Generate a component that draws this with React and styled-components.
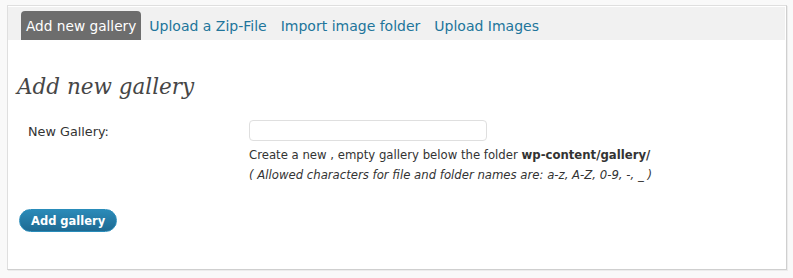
import React from 'react';
import styled, { createGlobalStyle } from 'styled-components';

const GlobalStyle = createGlobalStyle`
  body {
    margin: 0;
    background: #f9f9f9;
    font-family: "DejaVu Sans", Verdana, sans-serif;
  }
`;

const Page = styled.div`
  padding: 5px 6px 6px 7px;
`;

const Panel = styled.div`
  background: #fff;
  border: 1px solid #dfdfdf;
  border-right-color: #cfcfcf;
  border-bottom-color: #cfcfcf;
  box-shadow: 1px 1px 0 #ececec;
  height: 265px;
  box-sizing: border-box;
`;

const TabBar = styled.ul`
  display: flex;
  align-items: flex-end;
  gap: 2px;
  margin: 1px 1px 0 0;
  padding: 3px 0 0 13px;
  list-style: none;
  background: #f1f1f1;
  height: 30px;
`;

const Tab = styled.li`
  height: 29px;
  display: flex;
  align-items: center;
  padding: 0 ${p => (p.active ? '5px' : '6px')};
  font-size: ${p => (p.active ? '13.7px' : '14px')};
  border-radius: 4px 4px 0 0;
  color: ${p => (p.active ? '#fff' : '#21759b')};
  background: ${p => (p.active ? '#6d6d6d' : 'transparent')};
`;

const Body = styled.div`
  padding: 0 0 0 9px;
`;

const Title = styled.h2`
  margin: 32px 0 0;
  font-family: "DejaVu Serif", Georgia, serif;
  font-style: italic;
  font-weight: normal;
  font-size: 21.5px;
  color: #464646;
  line-height: 30px;
`;

const Row = styled.div`
  display: grid;
  grid-template-columns: 232px 1fr;
  margin-top: 18px;
`;

const Label = styled.div`
  padding: 4px 0 0 11px;
  font-size: 12.8px;
  color: #333;
`;

const Field = styled.div`
  display: flex;
  flex-direction: column;
`;

const Input = styled.input`
  width: 238px;
  height: 21px;
  box-sizing: border-box;
  border: 1px solid #dfdfdf;
  border-radius: 4px;
  margin: 0;
`;

const Help = styled.div`
  font-size: 11.7px;
  color: #333;
  line-height: 19px;
  margin-top: ${p => (p.italic ? '1px' : '5px')};
  font-style: ${p => (p.italic ? 'italic' : 'normal')};

  b {
    font-weight: bold;
  }
`;

const Button = styled.button`
  margin: 24px 0 0 2px;
  height: 23px;
  padding: 0 11px;
  border-radius: 12px;
  border: 1px solid #298cba;
  background: linear-gradient(#2b8ab8, #1e6a92);
  color: #fff;
  font-family: "DejaVu Sans", Verdana, sans-serif;
  font-weight: bold;
  font-size: 11.5px;
`;

export default function App() {
  return (
    <>
      <GlobalStyle />
      <Page>
        <Panel>
          <TabBar>
            <Tab active>Add new gallery</Tab>
            <Tab>Upload a Zip-File</Tab>
            <Tab>Import image folder</Tab>
            <Tab>Upload Images</Tab>
          </TabBar>
          <Body>
            <Title>Add new gallery</Title>
            <Row>
              <Label>New Gallery:</Label>
              <Field>
                <Input type="text" />
                <Help>
                  Create a new , empty gallery below the folder <b>wp-content/gallery/</b>
                </Help>
                <Help italic>( Allowed characters for file and folder names are: a-z, A-Z, 0-9, -, _ )</Help>
              </Field>
            </Row>
            <Button>Add gallery</Button>
          </Body>
        </Panel>
      </Page>
    </>
  );
}
